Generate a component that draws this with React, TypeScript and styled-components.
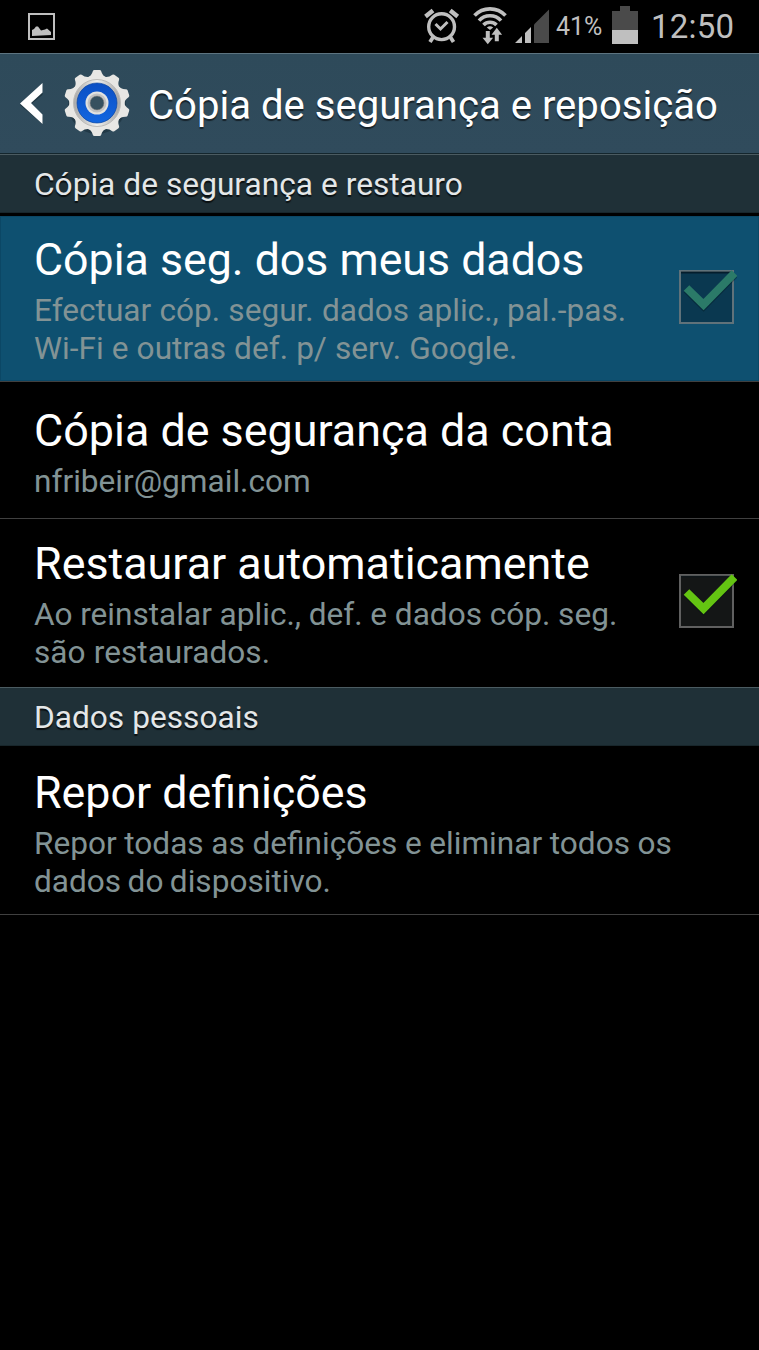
import React from 'react';
import styled, { createGlobalStyle } from 'styled-components';

const GlobalStyle = createGlobalStyle`
  *, *::before, *::after { box-sizing: border-box; }
  html, body { margin: 0; background: #000; }
  body { font-family: Roboto, "Noto Sans", sans-serif; color: #fff; }
`;

const Screen = styled.div`
  width: 759px;
  height: 1350px;
  background: #000;
  overflow: hidden;
`;

const StatusBar = styled.div`
  height: 53px;
  display: flex;
  align-items: flex-start;
  justify-content: space-between;
  padding: 0 24px 0 28px;
  color: #bfbfbf;
  svg { display: block; flex: none; }
`;

const StatusGroup = styled.div`
  display: flex;
  align-items: flex-start;
`;

const Battery = styled.span`
  font-size: 25px;
  line-height: 54px;
  width: 47px;
  margin-left: 6px;
  margin-right: 9px;
  white-space: nowrap;
`;

const Clock = styled.span`
  font-size: 33px;
  line-height: 53px;
  width: 84px;
  margin-left: 13px;
  white-space: nowrap;
  letter-spacing: 0.2px;
`;

const ActionBar = styled.header`
  height: 101px;
  display: flex;
  align-items: center;
  padding-left: 20px;
  background: linear-gradient(#2e4a5a, #304b5c);
  border-top: 1px solid #5d7480;
  border-bottom: 1px solid #14262d;
  svg { display: block; flex: none; }
`;

const ScreenTitle = styled.h1`
  margin: 4px 0 0 17px;
  font-size: 40.1px;
  font-weight: 400;
  line-height: 48px;
  white-space: nowrap;
  text-shadow: 0 2px 1px rgba(0, 0, 0, 0.55);
`;

const SectionHeader = styled.h2<{ $gap?: number }>`
  height: 59px;
  margin: 0 0 ${(p) => p.$gap ?? 0}px;
  padding-left: 34px;
  border-top: 1px solid #4b5b61;
  border-bottom: 1px solid #18262b;
  background: #1f3037;
  color: #e4e7e8;
  font-size: 31.65px;
  font-weight: 400;
  line-height: 60px;
  word-spacing: 0.2px;
  text-shadow: 0 2px 1px rgba(0, 0, 0, 0.7);
`;

const Row = styled.section<{ $height: number; $top: number; $pressed?: boolean }>`
  height: ${(p) => p.$height}px;
  padding: ${(p) => p.$top}px 22px 0 34px;
  display: flex;
  justify-content: space-between;
  background: ${(p) => (p.$pressed ? '#0e5070' : '#000')};
  box-shadow: ${(p) => (p.$pressed ? 'inset 0 0 0 1px #0b4765' : 'none')};
`;

const Divider = styled.hr`
  height: 1px;
  margin: 0;
  border: 0;
  background: #404040;
`;

const RowTitle = styled.h3<{ $size: number }>`
  margin: 0;
  font-size: ${(p) => p.$size}px;
  font-weight: 400;
  line-height: 52px;
  white-space: nowrap;
`;

const Summary = styled.p`
  margin: 6px 0 0;
  color: #829395;
  font-size: 31.6px;
  line-height: 37.5px;
`;

const SummaryLine = styled.span<{ $spacing: number }>`
  display: block;
  word-spacing: ${(p) => p.$spacing}px;
  white-space: nowrap;
`;

const CheckSlot = styled.div<{ $top: number }>`
  width: 58px;
  flex: none;
  padding-top: ${(p) => p.$top}px;
  svg { display: block; }
`;

const NotificationIcon = styled.div`
  padding-top: 13px;
`;

const PictureIcon = () => (
  <svg width="27" height="27" viewBox="0 0 27 27">
    <rect x="1" y="1" width="25" height="25" fill="none" stroke="#bfbfbf" strokeWidth="2" />
    <path d="M4 23v-6l2-1 2-2.500h2l3 4 4-1 2-1 4 3.500v3z" fill="#bfbfbf" />
  </svg>
);

const StatusIcons = () => (
  <svg width="127" height="46" viewBox="423 0 127 46">
    <g fill="none" stroke="#bfbfbf">
      <circle cx="441.600" cy="26.700" r="12.900" strokeWidth="3.400" />
      <path d="M435.500 24l5 5 7-7" strokeWidth="3" />
      <path d="M425.500 16.500l7.500-6M457.700 16.500l-7.500-6" strokeWidth="4.400" />
      <path d="M433.500 36.500l-3.500 5.500M450 36.500l3.500 5.500" strokeWidth="3.800" />
      <path d="M474.500 15.600A21.200 21.200 0 0 1 505.500 15.600M479 20.600A14.800 14.800 0 0 1 501 20.600M483.500 25A9 9 0 0 1 496.500 25" strokeWidth="3.600" />
      <path d="M487.800 31v8M496.800 41.300v-8" strokeWidth="4" />
    </g>
    <path d="M486.800 27.500q3.200-2.500 6.400 0L490 30zM482.500 37.700h10.600l-5.300 6.600zM491.500 34.800h10.600l-5.300-7z" fill="#bfbfbf" />
    <path d="M534 24.500L549 9.500V43h-15z" fill="#4a4a4a" />
    <path d="M515 43l7-7v7zM525 33l6-6v16h-6z" fill="#bfbfbf" />
  </svg>
);

const BatteryIcon = () => (
  <svg width="26" height="46" viewBox="0 0 26 46">
    <path d="M0 11h8V6h10v5h8v19H0z" fill="#4a4a4a" />
    <path d="M0 30h26v14H0z" fill="#bfbfbf" />
  </svg>
);

const BackIcon = () => (
  <svg width="23" height="44" viewBox="0 0 23 44">
    <path d="M22.500 4v9L10.500 22.500l12 12.500v7L0 23z" fill="#142831" opacity=".6" />
    <path d="M22.500 1v9.500L11 21l11.500 11.500V42L0 21.500z" fill="#fff" />
  </svg>
);

const teeth = Array.from({ length: 10 }, (_, i) => i * 36);

const GearSlot = styled.div`
  margin-left: 20px;
`;

const GearIcon = () => (
  <svg width="68" height="70" viewBox="-34 -34 68 70">
    <defs>
      <linearGradient id="ring" x1="0" y1="0" x2="1" y2="0">
        <stop offset="0" stopColor="#a8a8a8" />
        <stop offset=".5" stopColor="#f0f0ee" />
        <stop offset="1" stopColor="#a5a5a5" />
      </linearGradient>
      <linearGradient id="blue" x1="0" y1="0" x2="0" y2="1">
        <stop offset="0" stopColor="#0b4fc4" />
        <stop offset="1" stopColor="#1266e0" />
      </linearGradient>
    </defs>
    <circle cy="2" r="29" fill="#142831" opacity=".5" />
    <g fill="#e8e7e4">
      <circle r="27.500" />
      {teeth.map((a) => (
        <path key={a} d="M-9.500-25.500Q-5.500-27-4.200-31.800Q-3.800-33-2.600-33H2.600Q3.800-33 4.200-31.800Q5.500-27 9.500-25.500z" transform={`rotate(${a})`} />
      ))}
    </g>
    <circle r="23.500" fill="url(#ring)" stroke="#bcbbb8" strokeWidth="1" />
    <circle r="20" fill="url(#blue)" stroke="#0a45a0" strokeWidth=".7" />
    <circle r="11.500" fill="#e2e2e0" />
    <circle r="8.500" fill="none" stroke="#c2c2c2" strokeWidth="2" />
    <circle r="7" fill="#36505f" stroke="#777" strokeWidth=".7" />
  </svg>
);

const CheckBox = ({ pressed }: { pressed?: boolean }) => (
  <svg width="58" height="56" viewBox="0 0 58 56">
    <rect x="1" y="2" width="53" height="52" fill={pressed ? '#0a3850' : '#141616'} stroke={pressed ? '#60727a' : '#606060'} strokeWidth="2" />
    <path d="M2 3.500h51" stroke="#02131e" strokeWidth="2" opacity={pressed ? 0.7 : 0.3} />
    <path d="M7.500 20.500L24.500 37L55.500 5.500" fill="none" stroke="#001018" strokeWidth="8" opacity=".35" />
    <path d="M7.500 19L24.500 35.500L55.500 4" fill="none" stroke={pressed ? '#2b7a68' : '#64c412'} strokeWidth="8" />
  </svg>
);

type SettingProps = {
  title: string;
  size?: number;
  lines: [string, number][];
  height: number;
  top: number;
  pressed?: boolean;
  checkTop?: number;
};

const Setting = ({ title, size = 44.7, lines, height, top, pressed, checkTop }: SettingProps) => (
  <Row $height={height} $top={top} $pressed={pressed}>
    <div>
      <RowTitle $size={size}>{title}</RowTitle>
      <Summary>
        {lines.map(([text, s]) => (
          <SummaryLine key={text} $spacing={s}>{text}</SummaryLine>
        ))}
      </Summary>
    </div>
    {checkTop !== undefined && (
      <CheckSlot $top={checkTop}><CheckBox pressed={pressed} /></CheckSlot>
    )}
  </Row>
);

export default function App() {
  return (
    <Screen>
      <GlobalStyle />
      <StatusBar>
        <NotificationIcon><PictureIcon /></NotificationIcon>
        <StatusGroup>
          <StatusIcons />
          <Battery>41%</Battery>
          <BatteryIcon />
          <Clock>12:50</Clock>
        </StatusGroup>
      </StatusBar>
      <ActionBar>
        <BackIcon />
        <GearSlot><GearIcon /></GearSlot>
        <ScreenTitle>Cópia de segurança e reposição</ScreenTitle>
      </ActionBar>
      <SectionHeader $gap={3}>Cópia de segurança e restauro</SectionHeader>
      <Setting
        title="Cópia seg. dos meus dados"
        lines={[['Efectuar cóp. segur. dados aplic., pal.-pas.', 0.4], ['Wi-Fi e outras def. p/ serv. Google.', 0.3]]}
        height={165}
        top={18}
        checkTop={35}
        pressed
      />
      <Divider />
      <Setting title="Cópia de segurança da conta" size={44.87} lines={[['nfribeir@gmail.com', 0]]} height={136} top={23} />
      <Divider />
      <Setting
        title="Restaurar automaticamente"
        size={44.85}
        lines={[['Ao reinstalar aplic., def. e dados cóp. seg.', -0.1], ['são restaurados.', 0.5]]}
        height={168}
        top={19}
        checkTop={35}
      />
      <SectionHeader>Dados pessoais</SectionHeader>
      <Setting
        title="Repor definições"
        size={44.8}
        lines={[['Repor todas as definições e eliminar todos os', -0.2], ['dados do dispositivo.', -1.4]]}
        height={168}
        top={21}
      />
      <Divider />
    </Screen>
  );
}
